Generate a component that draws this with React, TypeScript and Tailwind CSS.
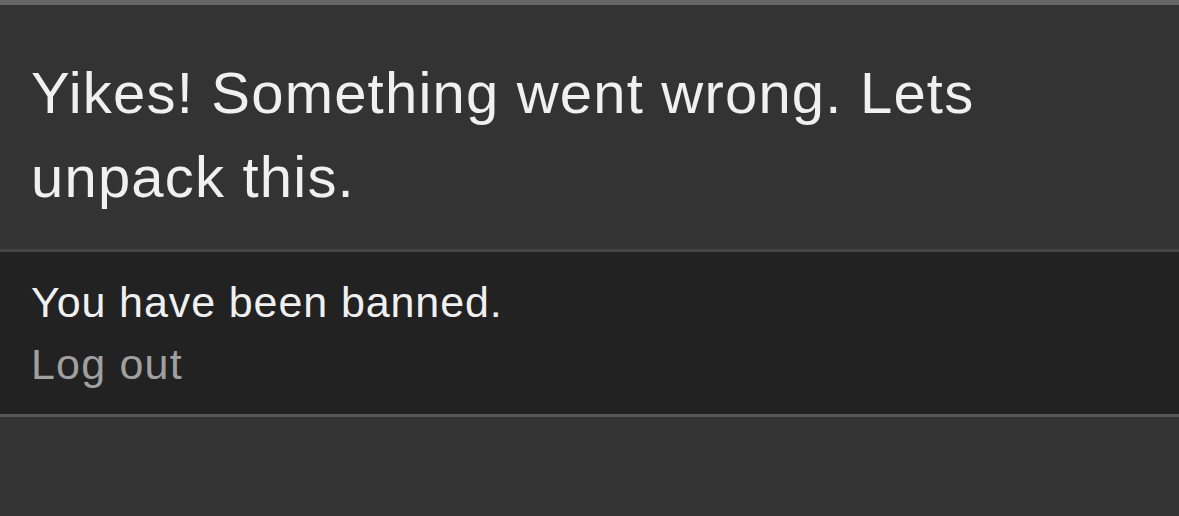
import React from 'react';

const App: React.FC = () => {
    return (
        <div className="min-h-[516px] bg-[#333333] font-['Liberation_Sans',Arial,sans-serif]">
            <div className="h-[5px] bg-[#666666]" />

            {/* Error heading */}
            <div className="px-[31px] pt-[46px] pb-[30px]">
                <h1 className="text-[58px] leading-[84px] tracking-[1.2px] text-[#f0f0f0]">
                    Yikes! Something went wrong. Lets unpack this.
                </h1>
            </div>

            {/* Message panel */}
            <div className="border-t-[3px] border-b-[3px] border-t-[#454545] border-b-[#555555] bg-[#222222] px-[31px] pt-[19px] pb-[19px] tracking-[0.9px]">
                <p className="text-[43px] leading-[62px] text-[#f0f0f0]">You have been banned.</p>
                <a className="block text-[43px] leading-[62px] tracking-[1.2px] text-[#a0a0a0]" href="#">
                    Log out
                </a>
            </div>
        </div>
    );
};

export default App;
